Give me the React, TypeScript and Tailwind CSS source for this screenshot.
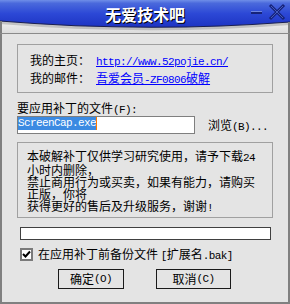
import React from "react";

const A = ({ children }: { children: React.ReactNode }) => (
  <span className="font-['Liberation_Mono',monospace] text-[11px] tracking-[-0.6px] leading-none">
    {children}
  </span>
);

export default function App() {
  return (
    <div className="w-[290px] h-[304px] flex flex-col bg-[#e4e4e4] font-['Noto_Sans_CJK_SC',sans-serif] text-[12px] text-black overflow-hidden">
      {/* title bar */}
      <div className="relative h-[34px] shrink-0 border-b border-[#8a8a8a]">
        <svg className="absolute inset-0" width="290" height="33" viewBox="0 0 290 33">
          <defs>
            <linearGradient id="blue" x1="0" y1="0" x2="0" y2="1">
              <stop offset="0" stopColor="#6f8ee8" />
              <stop offset="0.12" stopColor="#4a69dc" />
              <stop offset="0.5" stopColor="#2c48d6" />
              <stop offset="1" stopColor="#1d33c2" />
            </linearGradient>
            <linearGradient id="grey" x1="0" y1="0" x2="0" y2="1">
              <stop offset="0.6" stopColor="#f2f2f2" />
              <stop offset="1" stopColor="#dcdcdc" />
            </linearGradient>
          </defs>
          <rect x="0" y="0" width="290" height="33" fill="url(#grey)" />
          <path d="M0,22 Q145,34 290,23" fill="none" stroke="#9a9a9a" strokeWidth="4" opacity="0.5" />
          <path d="M0,0 H290 V22 Q145,33 0,21 Z" fill="url(#blue)" />
          <path d="M0,21 Q145,33 290,22" fill="none" stroke="#1a1f50" strokeWidth="1.2" />
          <rect x="0" y="21" width="2" height="12" fill="#808080" />
          <rect x="288" y="22" width="2" height="11" fill="#808080" />
          {/* minimize */}
          <rect x="251" y="11" width="11" height="3" fill="#16237a" />
          <rect x="251" y="11" width="11" height="1" fill="#6f86e0" />
          {/* close */}
          <path d="M271,6 L283,18 M283,6 L271,18" stroke="#16237a" strokeWidth="3" strokeLinecap="square" />
          <path d="M271,6 L283,18 M283,6 L271,18" stroke="#5a74d8" strokeWidth="1" opacity="0.7" />
        </svg>
        <div className="relative flex justify-center pt-[3px] text-[16px] font-bold leading-[22px] text-white [text-shadow:1px_1px_0_#000]">
          无爱技术吧
        </div>
      </div>

      {/* body */}
      <div className="flex-1 border-x-2 border-b-2 border-[#808080] flex flex-col">
        {/* group 1 */}
        <div className="mt-[10px] ml-[15px] w-[256px] h-[49px] border border-[#a0a0a0] pt-[6px] pl-[12px] leading-[18px]">
          <div className="flex">
            <span className="w-[66px]">我的主页：</span>
            <span className="text-[#0000ff] underline">
              <A>http://www.52pojie.cn/</A>
            </span>
          </div>
          <div className="flex">
            <span className="w-[66px]">我的邮件：</span>
            <span className="text-[#0000ff] underline">
              吾爱会员<A>-ZF0806</A>破解
            </span>
          </div>
        </div>

        {/* file label */}
        <div className="mt-[8px] ml-[15px] leading-[14px]">
          要应用补丁的文件<A>(F):</A>
        </div>

        {/* input row */}
        <div className="ml-[15px] flex items-center">
          <div className="w-[178px] h-[18px] bg-white border border-[#7f7f7f] flex items-start">
            <span className="bg-[#3b8ae2] text-white leading-[13px] h-[13px] flex items-center">
              <A>ScreenCap.exe</A>
            </span>
            <span className="w-[1px] h-[13px] bg-[#ff7a00]" />
          </div>
          <div className="ml-[13px] leading-[14px]">
            浏览<A>(B)...</A>
          </div>
        </div>

        {/* group 2 */}
        <div className="mt-[8px] ml-[15px] w-[256px] h-[76px] border border-[#a0a0a0] pt-[7px] pl-[9px] leading-[12px] whitespace-pre">
          <div>本破解补丁仅供学习研究使用，请予下载<A>24</A></div>
          <div>小时内删除，</div>
          <div>禁止商用行为或买卖，如果有能力，请购买</div>
          <div>正版，你将</div>
          <div>获得更好的售后及升级服务，谢谢<A>!</A></div>
        </div>

        {/* progress */}
        <div className="mt-[9px] ml-[18px] w-[251px] h-[13px] bg-white border border-[#404040]" />

        {/* checkbox */}
        <div className="mt-[8px] ml-[18px] flex items-center h-[13px]">
          <div className="w-[13px] h-[13px] bg-white border-2 border-[#7a7a7a] flex items-center justify-center">
            <svg width="9" height="9" viewBox="0 0 9 9">
              <path d="M1,4 L3.5,6.5 L8,1.5" fill="none" stroke="#000" strokeWidth="2" />
            </svg>
          </div>
          <span className="ml-[5px] leading-[14px]">
            在应用补丁前备份文件 <A>[</A>扩展名<A>.bak]</A>
          </span>
        </div>

        {/* buttons */}
        <div className="mt-[8px] flex">
          <button className="ml-[56px] w-[66px] h-[20px] border border-[#1a1a1a] flex items-center justify-center leading-[14px]">
            确定<A>(O)</A>
          </button>
          <button className="ml-[32px] w-[75px] h-[20px] border border-[#1a1a1a] flex items-center justify-center leading-[14px]">
            取消<A>(C)</A>
          </button>
        </div>
      </div>
    </div>
  );
}
